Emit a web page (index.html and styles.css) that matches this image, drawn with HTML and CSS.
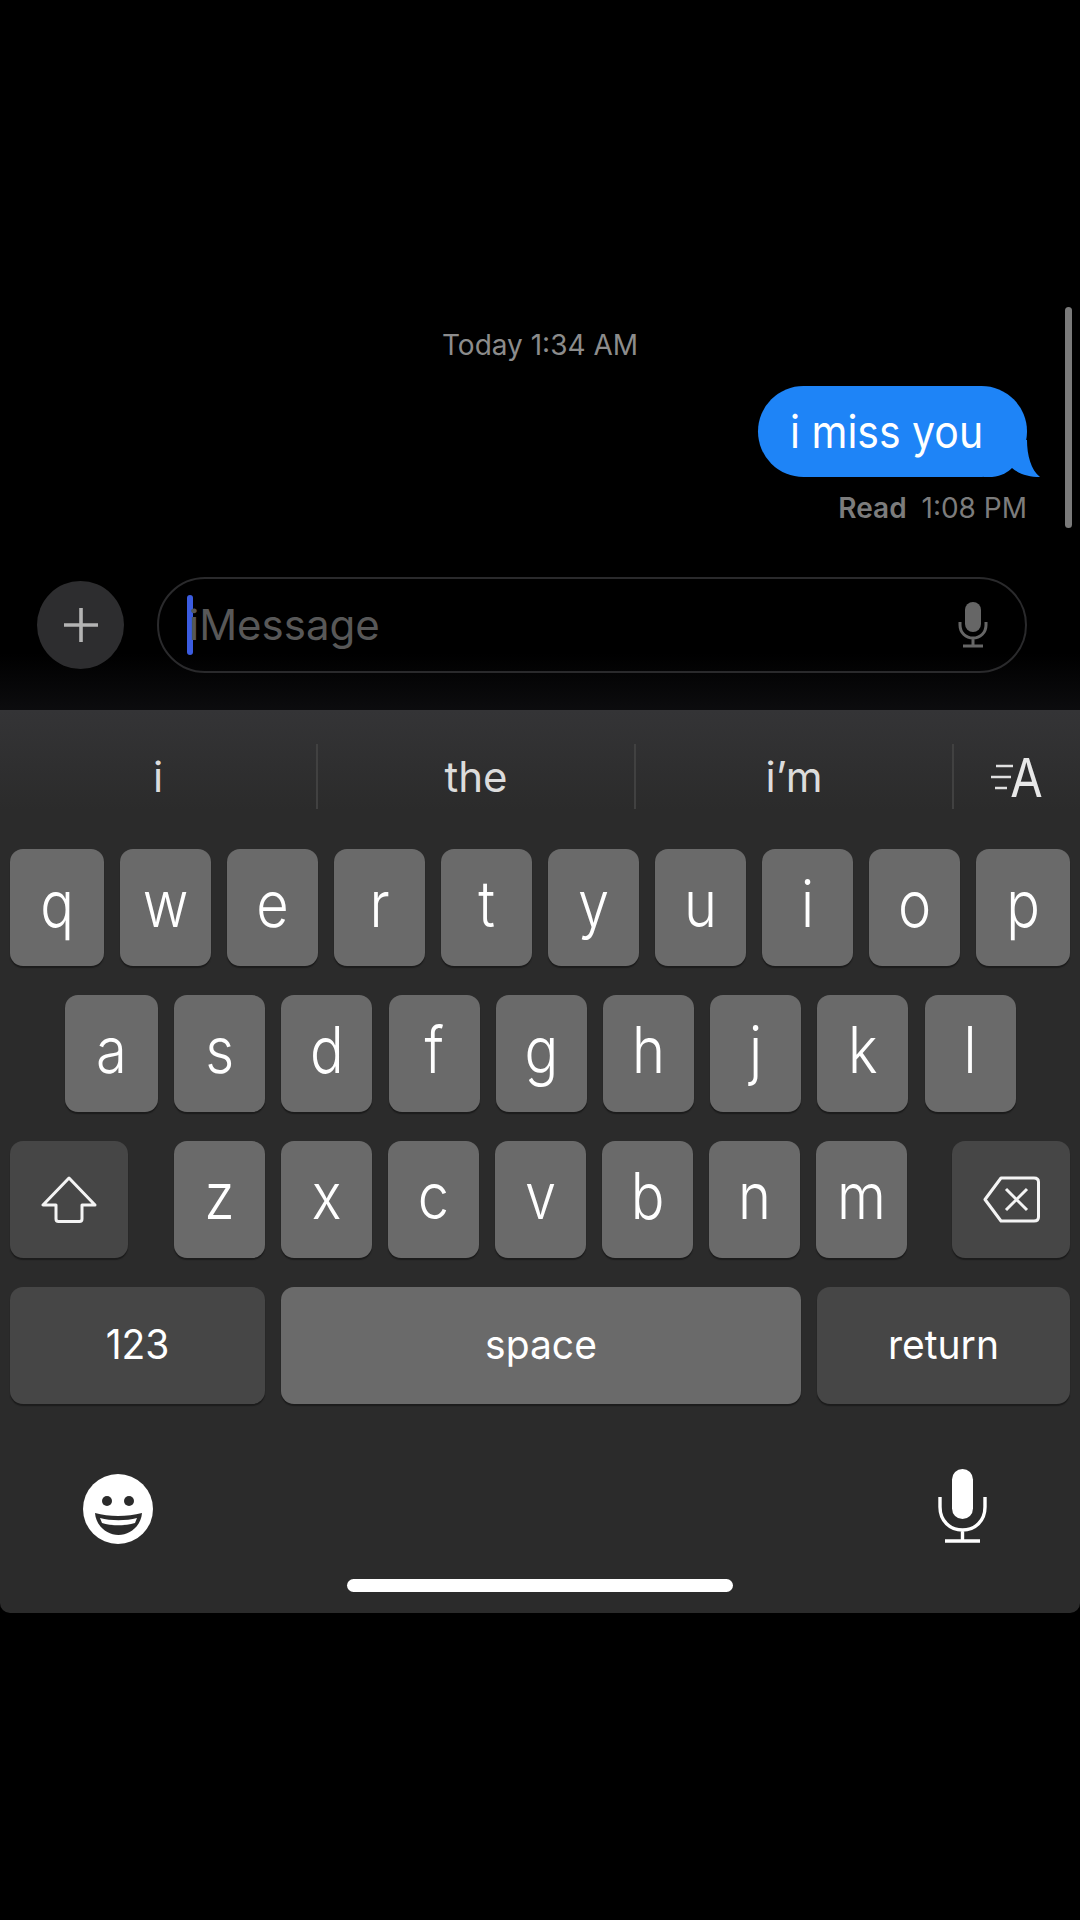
FILE: index.html
```html
<!DOCTYPE html>
<html lang="en">
  <head>
    <meta charset="UTF-8" />
    <meta name="viewport" content="width=device-width, initial-scale=1.0" />
    <title>Messages</title>
    <link rel="stylesheet" href="styles.css">
  </head>
  <body>
    <div class="chat">
      <div class="scrollbar"></div>
      <p class="timestamp">Today 1:34 AM</p>
      <div class="bubble-row">
        <div class="bubble">
          <span class="bubble-text">i miss you</span>
          <svg class="bubble-tail" viewBox="0 0 56 37" width="56" height="37">
            <path d="M43 0C43 15 47 30 56 37 45 37 35 34 28 28 24 32 18 36 8 37H0V0Z" fill="#1e84f7" />
          </svg>
        </div>
      </div>
      <p class="read"><b>Read</b> 1:08 PM</p>
    </div>

    <div class="composer">
      <div class="plus-btn">
        <svg viewBox="0 0 36 36" width="36" height="36">
          <path d="M18 1V35M1 18H35" stroke="#b4b4b4" stroke-width="3.600" />
        </svg>
      </div>
      <div class="message-field">
        <span class="caret"></span>
        <span class="placeholder">iMessage</span>
        <svg class="field-mic" viewBox="0 0 30 46" width="30" height="46">
          <rect x="7" y="0" width="16" height="30" rx="8" fill="#666" />
          <path d="M2 20V23C2 31 8 36 15 36 22 36 28 31 28 23V20M15 36V43M5 44H25" fill="none" stroke="#666" stroke-width="3" />
        </svg>
      </div>
    </div>

    <div class="keyboard">
      <div class="suggestions">
        <div class="suggestion">i</div>
        <div class="suggestion">the</div>
        <div class="suggestion">i’m</div>
        <div class="text-options">
          <svg viewBox="0 0 24 26" width="24" height="26">
            <path d="M5 2H22M0 13H20M4 24H16" stroke="#e0e0e0" stroke-width="2.600" />
          </svg>
          <span class="label">A</span>
        </div>
      </div>

      <div class="key-row">
        <div class="key edge"><span class="label">q</span></div>
        <div class="key"><span class="label">w</span></div>
        <div class="key"><span class="label">e</span></div>
        <div class="key"><span class="label">r</span></div>
        <div class="key"><span class="label">t</span></div>
        <div class="key"><span class="label">y</span></div>
        <div class="key"><span class="label">u</span></div>
        <div class="key"><span class="label">i</span></div>
        <div class="key"><span class="label">o</span></div>
        <div class="key edge"><span class="label">p</span></div>
      </div>

      <div class="key-row row-two">
        <div class="key edge"><span class="label">a</span></div>
        <div class="key"><span class="label">s</span></div>
        <div class="key"><span class="label">d</span></div>
        <div class="key"><span class="label">f</span></div>
        <div class="key"><span class="label">g</span></div>
        <div class="key"><span class="label">h</span></div>
        <div class="key"><span class="label">j</span></div>
        <div class="key"><span class="label">k</span></div>
        <div class="key"><span class="label">l</span></div>
      </div>

      <div class="key-row">
        <div class="key dark shift">
          <svg viewBox="0 0 56 47" width="56" height="47">
            <path d="M28 2 2 29H15V43C15 44.500 16 45.500 17.500 45.500H38.500C40 45.500 41 44.500 41 43V29H54Z" fill="none" stroke="#f4f4f4" stroke-width="3" stroke-linejoin="round" />
          </svg>
        </div>
        <div class="key"><span class="label">z</span></div>
        <div class="key"><span class="label">x</span></div>
        <div class="key"><span class="label">c</span></div>
        <div class="key"><span class="label">v</span></div>
        <div class="key"><span class="label">b</span></div>
        <div class="key"><span class="label">n</span></div>
        <div class="key"><span class="label">m</span></div>
        <div class="key dark delete">
          <svg viewBox="0 0 57 47" width="57" height="47">
            <path d="M18 2H51C54 2 55.500 3.500 55.500 6V41C55.500 43.500 54 45 51 45H18L2 23.500Z" fill="none" stroke="#f4f4f4" stroke-width="3" stroke-linejoin="round" />
            <path d="M23 13 44 34M44 13 23 34" stroke="#f4f4f4" stroke-width="3" />
          </svg>
        </div>
      </div>

      <div class="key-row">
        <div class="key dark numbers"><span class="label">123</span></div>
        <div class="key space"><span class="label">space</span></div>
        <div class="key dark return"><span class="label">return</span></div>
      </div>

      <div class="keyboard-footer">
        <svg class="emoji" viewBox="0 0 70 70" width="70" height="70">
          <circle cx="35" cy="35" r="35" fill="#fff" />
          <circle cx="24" cy="27" r="5" fill="#2b2b2b" />
          <circle cx="46" cy="27" r="5" fill="#2b2b2b" />
          <path d="M12 39C26 43 44 43 59 39 58 52 47 61 35.500 61 24 61 13 52 12 39Z" fill="#2b2b2b" />
          <path d="M17 44C28 47 43 47 54 44L52 49C42 52 28 52 19 49Z" fill="#fff" />
        </svg>
        <svg viewBox="0 0 49 74" width="49" height="74">
          <rect x="14" y="0" width="21" height="50" rx="10.500" fill="#fff" />
          <path d="M2 28V38C2 52 12 61 24.500 61 37 61 47 52 47 38V28M24.500 61V71M7 72H42" fill="none" stroke="#fff" stroke-width="3.400" />
        </svg>
      </div>
      <div class="home-bar"></div>
    </div>
  </body>
</html>
```

FILE: styles.css
```css
body {
  margin: 0;
  height: 1920px;
  background-color: #000;
  color: #fff;
  font-family: Inter, "Liberation Sans", sans-serif;
  overflow: hidden;
}
p {
  margin: 0;
}
.chat {
  position: relative;
  height: 569px;
  box-sizing: border-box;
  padding: 328px 53px 0 0;
}
.scrollbar {
  position: absolute;
  top: 307px;
  right: 8px;
  width: 7px;
  height: 221px;
  border-radius: 4px;
  background-color: #7a7a7a;
}
.timestamp {
  padding-left: 53px;
  text-align: center;
  color: #8c8c8c;
  font-size: 28px;
  line-height: 34px;
}
.bubble-row {
  display: flex;
  justify-content: flex-end;
  margin-top: 24px;
}
.bubble {
  position: relative;
  width: 269px;
  height: 91px;
  box-sizing: border-box;
  padding: 2px 0 0 32px;
  border-radius: 46px;
  background-color: #1e84f7;
  font-size: 41px;
  line-height: 89px;
}
.bubble-text {
  position: relative;
  z-index: 1;
  display: inline-block;
  transform: scaleY(1.1);
}
.bubble-tail {
  position: absolute;
  right: -13px;
  bottom: 0;
}
.read {
  margin-top: 14px;
  text-align: right;
  color: #7c7c7c;
  font-size: 28px;
  line-height: 34px;
}
.read b {
  font-weight: 600;
  margin-right: 7px;
}
.composer {
  display: flex;
  align-items: center;
  gap: 33px;
  height: 141px;
  box-sizing: border-box;
  padding: 0 53px 29px 37px;
  background: linear-gradient(#000 60%, #0c0c0e);
}
.plus-btn {
  display: flex;
  justify-content: center;
  align-items: center;
  flex: none;
  width: 87px;
  height: 88px;
  border-radius: 50%;
  background-color: #2d2d2f;
}
.message-field {
  display: flex;
  align-items: center;
  flex: 1;
  height: 96px;
  box-sizing: border-box;
  padding: 0 37px 0 28px;
  border: 2px solid #2a2a2c;
  border-radius: 48px;
}
.caret {
  flex: none;
  width: 6px;
  height: 60px;
  border-radius: 3px;
  background-color: #3b5ce0;
}
.placeholder {
  flex: 1;
  margin: -2px 0 0 -4px;
  color: #585858;
  font-size: 42px;
}
.keyboard {
  height: 903px;
  box-sizing: border-box;
  padding: 0 10px;
  border-radius: 0 0 10px 10px;
  background: linear-gradient(#343436, #2b2b2b 100px);
}
.suggestions {
  display: flex;
  align-items: center;
  height: 139px;
  margin: 0 -10px;
}
.suggestion {
  display: flex;
  justify-content: center;
  align-items: center;
  width: 318px;
  height: 65px;
  box-sizing: border-box;
  margin-top: -6px;
  border-right: 2px solid #414141;
  color: #dcdcdc;
  font-size: 42px;
}
.text-options {
  display: flex;
  justify-content: center;
  align-items: center;
  flex: 1;
  margin-top: -6px;
  color: #e8e8e8;
  font-size: 47px;
}
.text-options svg {
  margin-right: -5px;
}
.key-row {
  display: flex;
  gap: 16px;
  margin-bottom: 29px;
}
.row-two {
  gap: 16.2px;
  padding-left: 55px;
}
.key {
  display: flex;
  justify-content: center;
  align-items: center;
  width: 91px;
  height: 117px;
  flex: none;
  box-sizing: border-box;
  padding-bottom: 8px;
  border-radius: 13px;
  background-color: #6a6a6a;
  box-shadow: 0 2px 1px #1c1c1c;
  font-size: 56px;
  font-weight: 300;
}
.label {
  display: inline-block;
  transform: scaleY(1.15);
}
.key.edge {
  width: 94px;
}
.row-two .key.edge {
  width: 93px;
}
.key.dark {
  background-color: #464646;
}
.key.shift {
  width: 118px;
  margin-right: 30px;
  padding-bottom: 0;
}
.key.delete {
  width: 118px;
  margin-left: 29px;
  padding-bottom: 0;
}
.key.numbers {
  width: 255px;
}
.key.space {
  width: 520px;
}
.key.return {
  width: 253px;
}
.key.numbers,
.key.space,
.key.return {
  padding-bottom: 4px;
  font-size: 39px;
  font-weight: 400;
}
.key.numbers .label,
.key.space .label,
.key.return .label {
  transform: scaleY(1.04);
}
.keyboard-footer {
  display: flex;
  justify-content: space-between;
  align-items: center;
  height: 74px;
  margin-top: 65px;
  padding: 0 83px 0 73px;
}
.emoji {
  margin-top: 6px;
}
.home-bar {
  width: 386px;
  height: 13px;
  margin: 36px auto 0;
  border-radius: 7px;
  background-color: #fff;
}
```
